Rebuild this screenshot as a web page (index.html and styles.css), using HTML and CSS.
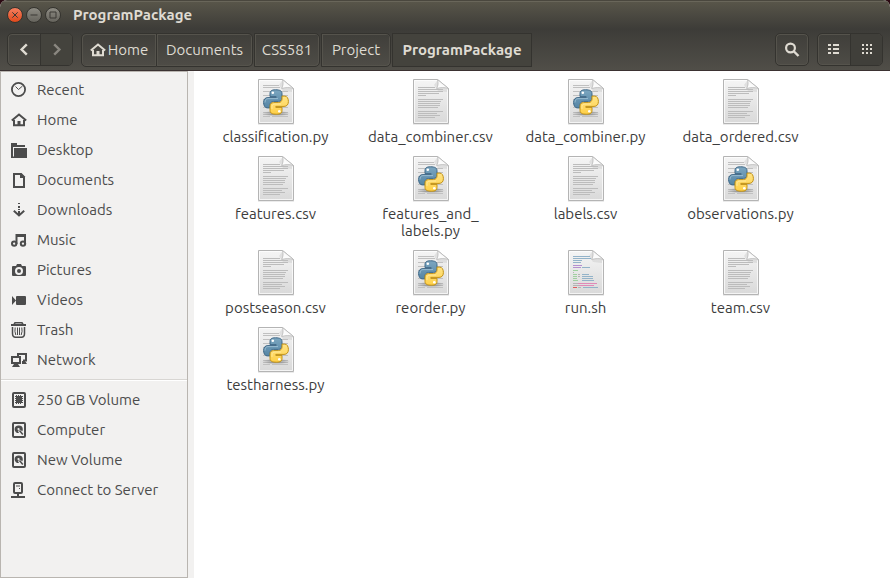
FILE: index.html
```html
<!DOCTYPE html>
<html lang="en">
<head>
<meta charset="utf-8">
<meta name="viewport" content="width=device-width, initial-scale=1">
<title>ProgramPackage</title>
<link rel="stylesheet" href="styles.css">
</head>
<body>
<svg class="sprite" aria-hidden="true">
  <defs>
    <linearGradient id="paper" x1="0" y1="0" x2="0" y2="1"><stop offset="0" stop-color="#f5f5f5"/><stop offset="1" stop-color="#d9d9d9"/></linearGradient>
    <linearGradient id="fold" x1="0" y1="1" x2="1" y2="0"><stop offset="0" stop-color="#ffffff"/><stop offset=".45" stop-color="#fafafa"/><stop offset="1" stop-color="#c4c4c4"/></linearGradient>
    <linearGradient id="blue" x1="0" y1="0" x2="0" y2="1"><stop offset="0" stop-color="#7ba6c0"/><stop offset="1" stop-color="#5585a5"/></linearGradient>
    <linearGradient id="gold" x1="0" y1="0" x2="0" y2="1"><stop offset="0" stop-color="#ffd047"/><stop offset="1" stop-color="#ffe486"/></linearGradient>
    <radialGradient id="shade"><stop offset="0" stop-color="#000" stop-opacity=".35"/><stop offset="1" stop-color="#000" stop-opacity="0"/></radialGradient>
    <path id="snake" d="M12.500.8C8.500.8 7 2 7 4.500V7.600H13.200V8.600H5C2 8.600.6 10.500.6 13.500s1.300 5.400 3.600 5.400H7V16.200c0-2.400 1.500-3.800 3.700-3.800h4.800c2.300 0 3.500-1.300 3.500-3.500V4.500C19 2 17 .8 12.500.8z"/>
    <g id="page">
      <path d="M1 46.500h36" stroke="#000" stroke-opacity=".08"/>
      <path d="M1.500 1.500h24l11 9v35h-35z" fill="url(#paper)" stroke="#b4b4b4"/>
      <path d="M2.500 2.500h22.500M2.500 2.500v42h33V12" fill="none" stroke="#fff" stroke-opacity=".7"/>
      <path d="M22 7l4 6 9 1v-3L25.500 2z" fill="#000" opacity=".07"/>
      <path d="M25.500 1.500c.8 3 .8 6-.8 9 4-1.200 8-1.200 11.800 0z" fill="url(#fold)" stroke="#b8b8b8" stroke-width=".8"/>
    </g>
  </defs>
  <symbol id="csv" viewBox="0 0 38 48">
    <use href="#page"/>
    <g fill="none" stroke="#bcbcbc">
      <path d="M6 9.500h17M6 11.500h25M6 13.500h25M6 15.500h21M6 17.500h8M6 21.500h25M6 23.500h23M6 25.500h22M6 27.500h22M6 29.500h20M6 33.500h25M6 35.500h19M6 37.500h22M6 39.500h17"/>
    </g>
  </symbol>
  <symbol id="py" viewBox="0 0 38 48">
    <use href="#page"/>
    <g fill="none" stroke="#c0c0c0">
      <path d="M6 7.500h16M6 9.500h17M6 13.500h25M6 17.500h25M6 21.500h25M6 25.500h25M6 29.500h25M6 34.500h25M6 36.500h25M6 38.500h7M15 38.500h16"/>
    </g>
    <ellipse cx="19" cy="35.500" rx="14" ry="3" fill="url(#shade)"/>
    <g transform="translate(6 11)">
      <use href="#snake" fill="url(#blue)" stroke="#3f6887"/>
      <use href="#snake" fill="url(#gold)" stroke="#c29216" transform="rotate(180 13 13)"/>
      <circle cx="9.800" cy="3.800" r="1.300" fill="#fff"/>
      <circle cx="16.300" cy="22.300" r="1.300" fill="#fff"/>
      <path d="M2 13.500c0-2.500 1-3.900 3-3.900h10" fill="none" stroke="#b9d5e5" stroke-opacity=".6"/>
      <path d="M9 20v-2.500c0-1.500 1-2.500 3-2.500h6" fill="none" stroke="#fff4c0" stroke-opacity=".6"/>
    </g>
  </symbol>
  <symbol id="sh" viewBox="0 0 38 48">
    <use href="#page"/>
    <g fill="none" stroke-width="1">
      <path stroke="#93b3c9" d="M6 7.500h17M6 9.500h18M6 11.500h9M6 13.500h8M15 18.500h8M15 25.500h7M15 27.500h11M15 29.500h11M15 31.500h12M16 38.500h15"/>
      <path stroke="#b58fd0" d="M6 16.500h9M6 18.500h8"/>
      <path stroke="#9fd09f" d="M6 21.500h5M6 25.500h4M6 27.500h4M6 29.500h4M6 31.500h5"/>
      <path stroke="#b4b4b4" d="M6 23.500h1M11 25.500h2M11 27.500h2M6 34.500h5M6 36.500h6M11 38.500h3"/>
      <path stroke="#e08ab8" d="M11 34.500h19M12 36.500h15"/>
      <path stroke="#e05c5c" d="M6 38.500h4"/>
    </g>
  </symbol>
  <symbol id="recent" viewBox="0 0 16 16"><circle cx="7.500" cy="7.500" r="6.600" fill="none" stroke="currentColor" stroke-width="1.800"/><path d="M4.500 4.500l3 3 4-3.500" fill="none" stroke="currentColor"/></symbol>
  <symbol id="home" viewBox="0 0 16 16"><path d="M.8 8.500L8 2.600l7.200 5.900" fill="none" stroke="currentColor" stroke-width="2"/><path d="M3 8v5.200h10V8" fill="none" stroke="currentColor" stroke-width="2"/><path d="M6.500 9h3v4h-3z" fill="currentColor"/></symbol>
  <symbol id="desktop" viewBox="0 0 16 16"><path d="M0 1h6v2h8v2H2v9H0zM3 6h13v10H0v-2h3z" fill="currentColor"/><path d="M2.500 14.500v-9H14" fill="none" stroke="#f2f1f0"/></symbol>
  <symbol id="documents" viewBox="0 0 16 16"><path d="M3 2h6.500L13 5.500V15H3z" fill="none" stroke="currentColor" stroke-width="2"/><path d="M9 1h1.500L14 4.500V6H9z" fill="currentColor"/></symbol>
  <symbol id="downloads" viewBox="0 0 16 16"><path d="M7 1h2v1H7zM7 4h2v2H7zM7 7h2v1H7zM7 9h2v4H7z" fill="currentColor"/><path d="M2.800 8.800L8 13.400l5.200-4.600" fill="none" stroke="currentColor" stroke-width="2"/></symbol>
  <symbol id="music" viewBox="0 0 16 16"><g fill="none" stroke="currentColor" stroke-width="2"><circle cx="3.200" cy="11.600" r="2.200"/><circle cx="12" cy="11.600" r="2.200"/><path d="M5.500 12V3H14v9"/></g><path d="M5 2h10v3H5z" fill="currentColor"/></symbol>
  <symbol id="pictures" viewBox="0 0 16 16"><path fill="currentColor" fill-rule="evenodd" d="M2 4h3l1-2h4l1 2h3q1 0 1 1v8q0 1-1 1H2q-1 0-1-1V5q0-1 1-1zm6 1a4 4 0 100 8 4 4 0 000-8zm0 2a2 2 0 110 4 2 2 0 010-4z"/></symbol>
  <symbol id="videos" viewBox="0 0 16 16"><path fill="currentColor" d="M1 4l4 4.500L1 13zM6 4h8q1 0 1 1v7q0 1-1 1H6q-1 0-1-1V5q0-1 1-1z"/></symbol>
  <symbol id="trash" viewBox="0 0 16 16"><g fill="none" stroke="currentColor"><path stroke-width="2" d="M0 3h15"/><path stroke-width="1.500" d="M3 2.500L4 .8h7l1 1.700M1.500 5v6.500q0 3.700 3 3.700h6q3 0 3-3.700V5"/><path d="M4.200 5.500q-.8 4 .6 7.500M10.800 5.500q.8 4-.6 7.500M6.500 5.500V13M8.500 5.500V13"/></g></symbol>
  <symbol id="network" viewBox="0 0 16 16"><path fill="none" stroke="currentColor" stroke-width="2" d="M7 4V2h8v6.500h-3M1 5h8v6H1z"/><path fill="currentColor" d="M3 12h4l2 3H1zM11 9h3l2 3h-5z"/></symbol>
  <symbol id="chip" viewBox="0 0 16 16"><rect x="2" y="1" width="12" height="14" rx="1" fill="none" stroke="currentColor" stroke-width="2"/><path fill="currentColor" d="M5 4h6v7H5z"/><path stroke="currentColor" d="M4 4.500h8M4 6.500h8M4 8.500h8M4 10.500h8M5.500 3v9M7.500 3v9M9.500 3v9"/></symbol>
  <symbol id="disk" viewBox="0 0 16 16"><rect x="2" y="1" width="12" height="14" rx="1" fill="none" stroke="currentColor" stroke-width="2"/><path fill="currentColor" d="M8 3.500a3.800 3.800 0 013.800 3.800q0 1-.5 2L8.700 7.500 7 9l1 2A3.800 3.800 0 118 3.500z"/><circle cx="7.500" cy="7" r="1.100" fill="#f2f1f0"/><path stroke="currentColor" stroke-width="1.600" d="M8.500 8.500l3.300 4"/></symbol>
  <symbol id="server" viewBox="0 0 16 16"><rect x="3" y="1" width="8" height="10" rx="1" fill="none" stroke="currentColor" stroke-width="2"/><path fill="currentColor" d="M5 3.500h4v1H5zM8 6h1v1H8zM6 11h2v3H6zM0 14h14v2H0z"/></symbol>
  <symbol id="prev" viewBox="0 0 16 16"><path fill="none" stroke="currentColor" stroke-width="2.400" d="M10.800 2.300L5.600 7.500l5.200 5.200"/></symbol>
  <symbol id="next" viewBox="0 0 16 16"><path fill="none" stroke="currentColor" stroke-width="2.400" d="M5.200 2.300L10.400 7.500l-5.200 5.200"/></symbol>
  <symbol id="search" viewBox="0 0 16 16"><circle cx="6.500" cy="6" r="4.400" fill="none" stroke="currentColor" stroke-width="2.200"/><path stroke="currentColor" stroke-width="2.400" d="M9.500 9l5 5"/></symbol>
  <symbol id="list" viewBox="0 0 16 16"><path fill="currentColor" d="M2 2h3v2H2zM7 2h6v2H7zM2 6h3v2H2zM7 6h6v2H7zM2 10h3v2H2zM7 10h6v2H7z"/></symbol>
  <symbol id="grid" viewBox="0 0 16 16"><path fill="currentColor" d="M3 2h2v2H3zM7 2h2v2H7zM11 2h2v2h-2zM3 6h2v2H3zM7 6h2v2H7zM11 6h2v2h-2zM3 10h2v2H3zM7 10h2v2H7zM11 10h2v2h-2z"/></symbol>
</svg>

<div class="window">
  <header class="titlebar">
    <button class="control close" type="button" aria-label="Close"><svg viewBox="0 0 16 16"><path d="M5.300 5.300l5.400 5.400M10.700 5.300l-5.400 5.400"/></svg></button>
    <button class="control" type="button" aria-label="Minimize"><svg viewBox="0 0 16 16"><path d="M4.500 8h7"/></svg></button>
    <button class="control" type="button" aria-label="Maximize"><svg viewBox="0 0 16 16"><path d="M5 5h6v6H5z"/></svg></button>
    <h1>ProgramPackage</h1>
  </header>

  <div class="toolbar">
    <div class="group">
      <button class="tool" type="button" aria-label="Back"><svg class="glyph"><use href="#prev"/></svg></button>
      <button class="tool disabled" type="button" aria-label="Forward" disabled><svg class="glyph"><use href="#next"/></svg></button>
    </div>
    <nav class="path" aria-label="Location">
      <button class="crumb crumb-home" type="button"><svg class="glyph"><use href="#home"/></svg>Home</button>
      <button class="crumb crumb-documents" type="button">Documents</button>
      <button class="crumb crumb-course" type="button">CSS581</button>
      <button class="crumb crumb-project" type="button">Project</button>
      <button class="crumb current" type="button" aria-current="page">ProgramPackage</button>
    </nav>
    <div class="group">
      <button class="tool" type="button" aria-label="Search"><svg class="glyph"><use href="#search"/></svg></button>
    </div>
    <div class="group">
      <button class="tool" type="button" aria-label="List view"><svg class="glyph"><use href="#list"/></svg></button>
      <button class="tool pressed" type="button" aria-label="Icon view" aria-pressed="true"><svg class="glyph"><use href="#grid"/></svg></button>
    </div>
  </div>

  <div class="content">
    <nav class="sidebar" aria-label="Places">
      <ul class="places">
        <li><a href="#"><svg class="glyph"><use href="#recent"/></svg>Recent</a></li>
        <li><a href="#"><svg class="glyph"><use href="#home"/></svg>Home</a></li>
        <li><a href="#"><svg class="glyph"><use href="#desktop"/></svg>Desktop</a></li>
        <li><a href="#"><svg class="glyph"><use href="#documents"/></svg>Documents</a></li>
        <li><a href="#"><svg class="glyph"><use href="#downloads"/></svg>Downloads</a></li>
        <li><a href="#"><svg class="glyph"><use href="#music"/></svg>Music</a></li>
        <li><a href="#"><svg class="glyph"><use href="#pictures"/></svg>Pictures</a></li>
        <li><a href="#"><svg class="glyph"><use href="#videos"/></svg>Videos</a></li>
        <li><a href="#"><svg class="glyph"><use href="#trash"/></svg>Trash</a></li>
        <li><a href="#"><svg class="glyph"><use href="#network"/></svg>Network</a></li>
      </ul>
      <ul class="places">
        <li><a href="#"><svg class="glyph"><use href="#chip"/></svg>250 GB Volume</a></li>
        <li><a href="#"><svg class="glyph"><use href="#disk"/></svg>Computer</a></li>
        <li><a href="#"><svg class="glyph"><use href="#disk"/></svg>New Volume</a></li>
        <li><a href="#"><svg class="glyph"><use href="#server"/></svg>Connect to Server</a></li>
      </ul>
    </nav>

    <main class="files">
      <a class="file" href="#"><svg><use href="#py"/></svg><span>classification.py</span></a>
      <a class="file" href="#"><svg><use href="#csv"/></svg><span>data_combiner.csv</span></a>
      <a class="file" href="#"><svg><use href="#py"/></svg><span>data_combiner.py</span></a>
      <a class="file" href="#"><svg><use href="#csv"/></svg><span>data_ordered.csv</span></a>
      <a class="file" href="#"><svg><use href="#csv"/></svg><span>features.csv</span></a>
      <a class="file" href="#"><svg><use href="#py"/></svg><span>features_and_<br>labels.py</span></a>
      <a class="file" href="#"><svg><use href="#csv"/></svg><span>labels.csv</span></a>
      <a class="file" href="#"><svg><use href="#py"/></svg><span>observations.py</span></a>
      <a class="file" href="#"><svg><use href="#csv"/></svg><span>postseason.csv</span></a>
      <a class="file" href="#"><svg><use href="#py"/></svg><span>reorder.py</span></a>
      <a class="file" href="#"><svg><use href="#sh"/></svg><span>run.sh</span></a>
      <a class="file" href="#"><svg><use href="#csv"/></svg><span>team.csv</span></a>
      <a class="file" href="#"><svg><use href="#py"/></svg><span>testharness.py</span></a>
    </main>
  </div>
</div>
</body>
</html>
```

FILE: styles.css
```css
* { box-sizing: border-box; }

body {
  margin: 0;
  background: #2b0a12;
  color: #3c3c3c;
  font: 15px/18px Ubuntu, "Noto Sans", sans-serif;
}

button { font: inherit; color: inherit; padding: 0; margin: 0; }
a { color: inherit; text-decoration: none; }
ul { list-style: none; margin: 0; padding: 0; }

.sprite { position: absolute; width: 0; height: 0; }
.glyph { width: 16px; height: 16px; flex: none; }

.window {
  display: flex;
  flex-direction: column;
  min-height: 100vh;
  border-radius: 7px 7px 0 0;
  overflow: hidden;
  background: #fff;
}

.titlebar {
  display: flex;
  align-items: center;
  gap: 3px;
  height: 29px;
  padding-left: 7px;
  background: linear-gradient(#59564a, #3d3c38);
  border-top: 1px solid #4a473e;
  box-shadow: inset 0 1px #69665a;
  color: #dfdbd2;
}

.titlebar h1 {
  margin: 0 0 0 9px;
  font-size: 15px;
  font-weight: 700;
}

.control {
  width: 16px;
  height: 16px;
  border: 1px solid #35342f;
  border-radius: 50%;
  background: linear-gradient(#8d8b83, #66645d);
}

.control.close { background: linear-gradient(#f58060, #e0491b); }

.control svg {
  display: block;
  width: 16px;
  height: 16px;
  margin: -1px;
  fill: none;
  stroke: #3a3935;
}

.toolbar {
  display: flex;
  gap: 8px;
  height: 42px;
  padding: 4px 7px;
  background: linear-gradient(#3d3c38, #504e48);
  border-bottom: 1px solid #3b3232;
  color: #dfdbd2;
}

.group {
  display: flex;
  height: 33px;
  border: 1px solid #34332f;
  border-radius: 5px;
  box-shadow: inset 0 0 0 1px #55534c;
}

.tool {
  display: grid;
  place-items: center;
  width: 32px;
  height: 31px;
  border: 0;
  background: none;
}

.tool + .tool { border-left: 1px solid #34332f; }
.tool.disabled { color: #8a8780; background: #44433d; border-radius: 0 4px 4px 0; }
.tool.pressed { background: #403f3a; border-radius: 0 4px 4px 0; }

.path {
  display: flex;
  flex: 1;
  gap: 1px;
}

.crumb {
  display: flex;
  align-items: center;
  justify-content: center;
  gap: 2px;
  height: 34px;
  border: 1px solid #34332f;
  border-radius: 0 5px 5px 0;
  box-shadow: inset 1px 1px #55534c, inset -1px -1px #55534c;
  background: none;
  white-space: nowrap;
}

.crumb-home { width: 76px; margin-right: -1px; border-radius: 5px 0 0 5px; }
.crumb-documents { width: 96px; border-left: 0; }
.crumb-course { width: 66px; }
.crumb-project { width: 70px; }

.crumb.current {
  width: 140px;
  border-radius: 0;
  background: #44433d;
  box-shadow: none;
  font-weight: 700;
}

.content { display: flex; flex: 1; }

.sidebar {
  width: 188px;
  flex: none;
  padding-top: 3px;
  background: #f2f1f0;
  border: 1px solid #b9b5b0;
  color: #4c4c4c;
}

.places + .places {
  margin-top: 4px;
  padding-top: 5px;
  border-top: 1px solid #d8d6d3;
  box-shadow: inset 0 1px #fff;
}

.places a {
  display: flex;
  align-items: center;
  gap: 10px;
  height: 30px;
  padding-left: 10px;
}

.files {
  flex: 1;
  display: grid;
  grid-template-columns: repeat(auto-fill, 155px);
  align-content: start;
  row-gap: 10px;
  padding: 7px 0 0 4px;
  border-left: 6px solid #f2f1f0;
}

.file {
  display: flex;
  flex-direction: column;
  align-items: center;
  text-align: center;
  line-height: 17px;
}

.file svg { width: 38px; height: 48px; }
.file span { margin-top: 2px; }
```
